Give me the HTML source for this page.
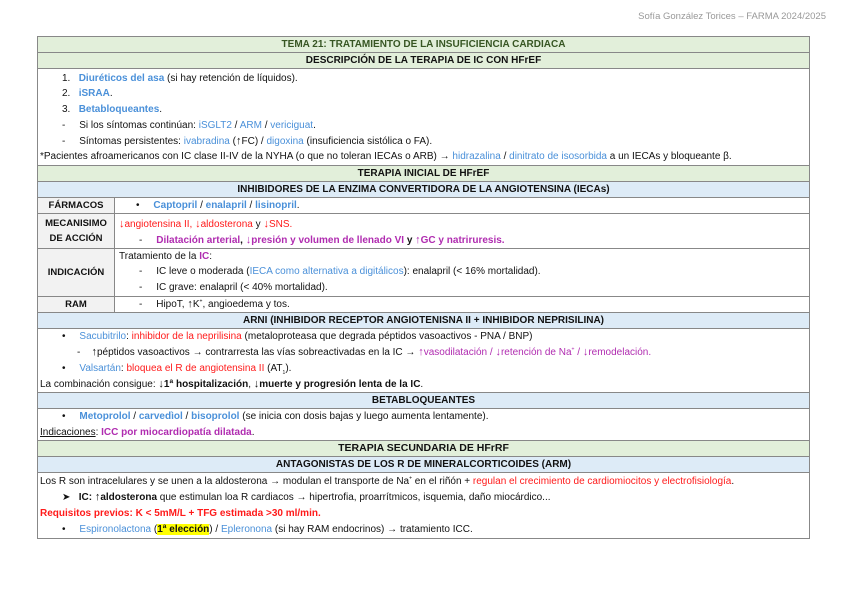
<!DOCTYPE html>
<html><head><meta charset="utf-8"><style>
body{margin:0;width:848px;height:599px;background:#fff;font-family:"Liberation Sans",sans-serif;font-size:10px;color:#111;position:relative;overflow:hidden}
.a{position:absolute;white-space:nowrap;line-height:12px}
.r{position:absolute;left:37px;width:773px;border:1px solid #888;box-sizing:border-box}
.g{background:#e2efda}.bl{background:#ddebf7}
.h{text-align:center;font-weight:bold;line-height:15px}
.lab{position:absolute;left:37px;width:78px;border:1px solid #888;box-sizing:border-box;background:#f2f2f2;font-weight:bold;text-align:center;display:flex;align-items:center;justify-content:center;line-height:15px;font-size:9.5px}
.b{color:#4a90d9}.bb{color:#4a90d9;font-weight:bold}.rd{color:#ff1a1a}.rb{color:#ff1a1a;font-weight:bold}.p{color:#b02cb0}.pb{color:#b02cb0;font-weight:bold}
.ar{font-weight:bold;font-size:11px;line-height:0}
sup,sub{line-height:0}
</style></head><body>
<div class="a" style="right:22px;top:11px;color:#999;font-size:9.5px">Sofía González Torices – FARMA 2024/2025</div>

<div class="r g h" style="top:36px;height:17px;color:#375623">TEMA 21: TRATAMIENTO DE LA INSUFICIENCIA CARDIACA</div>
<div class="r g h" style="top:52px;height:17px">DESCRIPCIÓN DE LA TERAPIA DE IC CON HFrEF</div>
<div class="r" style="top:68px;height:98px"></div>
<div class="a" style="left:62px;top:73px">1.&nbsp;&nbsp;&nbsp;<span class="bb">Diuréticos del asa</span> (si hay retención de líquidos).</div>
<div class="a" style="left:62px;top:88px">2.&nbsp;&nbsp;&nbsp;<span class="bb">iSRAA</span>.</div>
<div class="a" style="left:62px;top:104px">3.&nbsp;&nbsp;&nbsp;<span class="bb">Betabloqueantes</span>.</div>
<div class="a" style="left:62px;top:120px">-&nbsp;&nbsp;&nbsp;&nbsp;&nbsp;Si los síntomas continúan: <span class="b">iSGLT2</span> / <span class="b">ARM</span> / <span class="b">vericiguat</span>.</div>
<div class="a" style="left:62px;top:136px">-&nbsp;&nbsp;&nbsp;&nbsp;&nbsp;Síntomas persistentes: <span class="b">ivabradina</span> (<span class="ar">↑</span>FC) / <span class="b">digoxina</span> (insuficiencia sistólica o FA).</div>
<div class="a" style="left:40px;top:151px">*Pacientes afroamericanos con IC clase II-IV de la NYHA (o que no toleran IECAs o ARB) → <span class="b">hidrazalina</span> / <span class="b">dinitrato de isosorbida</span> a un IECAs y bloqueante β.</div>

<div class="r g h" style="top:165px;height:17px">TERAPIA INICIAL DE HFrEF</div>
<div class="r bl h" style="top:181px;height:17px">INHIBIDORES DE LA ENZIMA CONVERTIDORA DE LA ANGIOTENSINA (IECAs)</div>

<div class="r" style="top:197px;height:17px"></div>
<div class="lab" style="top:197px;height:17px">FÁRMACOS</div>
<div class="a" style="left:136px;top:200px">•&nbsp;&nbsp;&nbsp;&nbsp;&nbsp;<span class="bb">Captopril</span> / <span class="bb">enalapril</span> / <span class="bb">lisinopril</span>.</div>

<div class="r" style="top:213px;height:36px"></div>
<div class="lab" style="top:213px;height:36px">MECANISIMO<br>DE ACCIÓN</div>
<div class="a rd" style="left:119px;top:219px"><span class="ar">↓</span>angiotensina II, <span class="ar">↓</span>aldosterona <span style="color:#111">y</span> <span class="ar">↓</span>SNS.</div>
<div class="a pb" style="left:139px;top:235px"><span style="color:#111;font-weight:normal">-</span>&nbsp;&nbsp;&nbsp;&nbsp;&nbsp;Dilatación arterial<span style="color:#111">,</span> <span class="ar">↓</span>presión y volumen de llenado VI <span style="color:#111">y</span> <span class="ar">↑</span>GC y natriruresis.</div>

<div class="r" style="top:248px;height:49px"></div>
<div class="lab" style="top:248px;height:49px">INDICACIÓN</div>
<div class="a" style="left:119px;top:251px">Tratamiento de la <span class="pb">IC</span>:</div>
<div class="a" style="left:139px;top:266px">-&nbsp;&nbsp;&nbsp;&nbsp;&nbsp;IC leve o moderada (<span class="b">IECA como alternativa a digitálicos</span>): enalapril (&lt; 16% mortalidad).</div>
<div class="a" style="left:139px;top:282px">-&nbsp;&nbsp;&nbsp;&nbsp;&nbsp;IC grave: enalapril (&lt; 40% mortalidad).</div>

<div class="r" style="top:296px;height:17px"></div>
<div class="lab" style="top:296px;height:17px">RAM</div>
<div class="a" style="left:139px;top:299px">-&nbsp;&nbsp;&nbsp;&nbsp;&nbsp;HipoT, <span class="ar">↑</span>K<sup style="font-size:5px">+</sup>, angioedema y tos.</div>

<div class="r bl h" style="top:312px;height:17px">ARNI (INHIBIDOR RECEPTOR ANGIOTENISNA II + INHIBIDOR NEPRISILINA)</div>
<div class="r" style="top:328px;height:65px"></div>
<div class="a" style="left:62px;top:331px">•&nbsp;&nbsp;&nbsp;&nbsp;&nbsp;<span class="b">Sacubitrilo</span>: <span class="rd">inhibidor de la neprilisina</span> (metaloproteasa que degrada péptidos vasoactivos - PNA / BNP)</div>
<div class="a" style="left:77px;top:347px">-&nbsp;&nbsp;&nbsp;&nbsp;<span class="ar">↑</span>péptidos vasoactivos → contrarresta las vías sobreactivadas en la IC → <span class="p"><span class="ar">↑</span>vasodilatación / <span class="ar">↓</span>retención de Na<sup style="font-size:5px">+</sup> / <span class="ar">↓</span>remodelación.</span></div>
<div class="a" style="left:62px;top:363px">•&nbsp;&nbsp;&nbsp;&nbsp;&nbsp;<span class="b">Valsartán</span>: <span class="rd">bloquea el R de angiotensina II</span> (AT<sub style="font-size:5px">1</sub>).</div>
<div class="a" style="left:40px;top:379px">La combinación consigue: <b><span class="ar">↓</span>1ª hospitalización</b>, <b><span class="ar">↓</span>muerte y progresión lenta de la IC</b>.</div>

<div class="r bl h" style="top:392px;height:17px">BETABLOQUEANTES</div>
<div class="r" style="top:408px;height:33px"></div>
<div class="a" style="left:62px;top:411px">•&nbsp;&nbsp;&nbsp;&nbsp;&nbsp;<span class="bb">Metoprolol</span> / <span class="bb">carvedìol</span> / <span class="bb">bisoprolol</span> (se inicia con dosis bajas y luego aumenta lentamente).</div>
<div class="a" style="left:40px;top:427px"><u>Indicaciones</u>: <span class="pb">ICC por miocardiopatía dilatada</span>.</div>

<div class="r g h" style="top:440px;height:17px;font-size:10.5px">TERAPIA SECUNDARIA DE HFrRF</div>
<div class="r bl h" style="top:456px;height:17px">ANTAGONISTAS DE LOS R DE MINERALCORTICOIDES (ARM)</div>
<div class="r" style="top:472px;height:67px"></div>
<div class="a" style="left:40px;top:476px">Los R son intracelulares y se unen a la aldosterona → modulan el transporte de Na<sup style="font-size:5px">+</sup> en el riñón + <span class="rd">regulan el crecimiento de cardiomiocitos y electrofisiología</span>.</div>
<div class="a" style="left:62px;top:492px">➤&nbsp;&nbsp;&nbsp;<b>IC: <span class="ar">↑</span>aldosterona</b> que estimulan loa R cardiacos → hipertrofia, proarrítmicos, isquemia, daño miocárdico...</div>
<div class="a rb" style="left:40px;top:508px">Requisitos previos: K &lt; 5mM/L + TFG estimada &gt;30 ml/min.</div>
<div class="a" style="left:62px;top:524px">•&nbsp;&nbsp;&nbsp;&nbsp;&nbsp;<span class="b">Espironolactona</span> (<b style="background:#ffff00">1ª elección</b>) / <span class="b">Epleronona</span> (si hay RAM endocrinos) → tratamiento ICC.</div>
</body></html>
